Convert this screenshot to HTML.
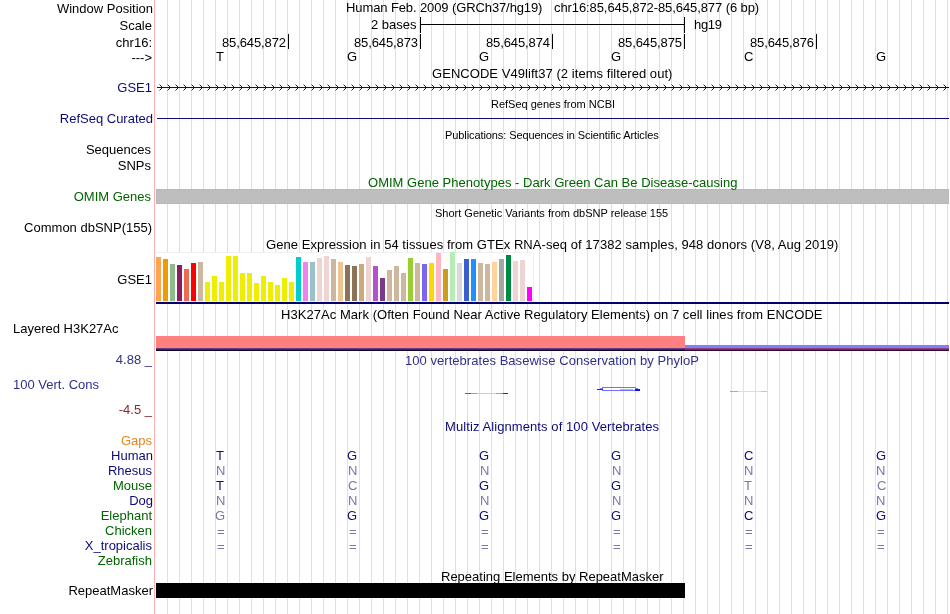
<!DOCTYPE html>
<html><head><meta charset="utf-8"><style>
html,body{margin:0;padding:0;background:#fff;overflow:hidden}
#c{position:relative;width:950px;height:614px;overflow:hidden;background:#fff;will-change:transform}
#c div{position:absolute}
#c .t{font-family:'Liberation Sans', sans-serif;line-height:15px;white-space:pre}
</style></head><body><div id="c">
<div style="left:167px;top:0px;width:1px;height:614px;background:#dcdcff;"></div>
<div style="left:179px;top:0px;width:1px;height:614px;background:#dcdcff;"></div>
<div style="left:191px;top:0px;width:1px;height:614px;background:#dcdcff;"></div>
<div style="left:203px;top:0px;width:1px;height:614px;background:#dcdcff;"></div>
<div style="left:215px;top:0px;width:1px;height:614px;background:#dcdcff;"></div>
<div style="left:227px;top:0px;width:1px;height:614px;background:#dcdcff;"></div>
<div style="left:239px;top:0px;width:1px;height:614px;background:#dcdcff;"></div>
<div style="left:251px;top:0px;width:1px;height:614px;background:#dcdcff;"></div>
<div style="left:263px;top:0px;width:1px;height:614px;background:#dcdcff;"></div>
<div style="left:275px;top:0px;width:1px;height:614px;background:#dcdcff;"></div>
<div style="left:287px;top:0px;width:1px;height:614px;background:#dcdcff;"></div>
<div style="left:299px;top:0px;width:1px;height:614px;background:#dcdcff;"></div>
<div style="left:311px;top:0px;width:1px;height:614px;background:#dcdcff;"></div>
<div style="left:323px;top:0px;width:1px;height:614px;background:#dcdcff;"></div>
<div style="left:335px;top:0px;width:1px;height:614px;background:#dcdcff;"></div>
<div style="left:347px;top:0px;width:1px;height:614px;background:#dcdcff;"></div>
<div style="left:359px;top:0px;width:1px;height:614px;background:#dcdcff;"></div>
<div style="left:371px;top:0px;width:1px;height:614px;background:#dcdcff;"></div>
<div style="left:383px;top:0px;width:1px;height:614px;background:#dcdcff;"></div>
<div style="left:395px;top:0px;width:1px;height:614px;background:#dcdcff;"></div>
<div style="left:407px;top:0px;width:1px;height:614px;background:#dcdcff;"></div>
<div style="left:419px;top:0px;width:1px;height:614px;background:#dcdcff;"></div>
<div style="left:431px;top:0px;width:1px;height:614px;background:#dcdcff;"></div>
<div style="left:443px;top:0px;width:1px;height:614px;background:#dcdcff;"></div>
<div style="left:455px;top:0px;width:1px;height:614px;background:#dcdcff;"></div>
<div style="left:467px;top:0px;width:1px;height:614px;background:#dcdcff;"></div>
<div style="left:479px;top:0px;width:1px;height:614px;background:#dcdcff;"></div>
<div style="left:491px;top:0px;width:1px;height:614px;background:#dcdcff;"></div>
<div style="left:503px;top:0px;width:1px;height:614px;background:#dcdcff;"></div>
<div style="left:515px;top:0px;width:1px;height:614px;background:#dcdcff;"></div>
<div style="left:527px;top:0px;width:1px;height:614px;background:#dcdcff;"></div>
<div style="left:539px;top:0px;width:1px;height:614px;background:#dcdcff;"></div>
<div style="left:551px;top:0px;width:1px;height:614px;background:#dcdcff;"></div>
<div style="left:563px;top:0px;width:1px;height:614px;background:#dcdcff;"></div>
<div style="left:575px;top:0px;width:1px;height:614px;background:#dcdcff;"></div>
<div style="left:587px;top:0px;width:1px;height:614px;background:#dcdcff;"></div>
<div style="left:599px;top:0px;width:1px;height:614px;background:#dcdcff;"></div>
<div style="left:611px;top:0px;width:1px;height:614px;background:#dcdcff;"></div>
<div style="left:623px;top:0px;width:1px;height:614px;background:#dcdcff;"></div>
<div style="left:635px;top:0px;width:1px;height:614px;background:#dcdcff;"></div>
<div style="left:647px;top:0px;width:1px;height:614px;background:#dcdcff;"></div>
<div style="left:659px;top:0px;width:1px;height:614px;background:#dcdcff;"></div>
<div style="left:671px;top:0px;width:1px;height:614px;background:#dcdcff;"></div>
<div style="left:683px;top:0px;width:1px;height:614px;background:#dcdcff;"></div>
<div style="left:695px;top:0px;width:1px;height:614px;background:#dcdcff;"></div>
<div style="left:707px;top:0px;width:1px;height:614px;background:#dcdcff;"></div>
<div style="left:719px;top:0px;width:1px;height:614px;background:#dcdcff;"></div>
<div style="left:731px;top:0px;width:1px;height:614px;background:#dcdcff;"></div>
<div style="left:743px;top:0px;width:1px;height:614px;background:#dcdcff;"></div>
<div style="left:755px;top:0px;width:1px;height:614px;background:#dcdcff;"></div>
<div style="left:767px;top:0px;width:1px;height:614px;background:#dcdcff;"></div>
<div style="left:779px;top:0px;width:1px;height:614px;background:#dcdcff;"></div>
<div style="left:791px;top:0px;width:1px;height:614px;background:#dcdcff;"></div>
<div style="left:803px;top:0px;width:1px;height:614px;background:#dcdcff;"></div>
<div style="left:815px;top:0px;width:1px;height:614px;background:#dcdcff;"></div>
<div style="left:827px;top:0px;width:1px;height:614px;background:#dcdcff;"></div>
<div style="left:839px;top:0px;width:1px;height:614px;background:#dcdcff;"></div>
<div style="left:851px;top:0px;width:1px;height:614px;background:#dcdcff;"></div>
<div style="left:863px;top:0px;width:1px;height:614px;background:#dcdcff;"></div>
<div style="left:875px;top:0px;width:1px;height:614px;background:#dcdcff;"></div>
<div style="left:887px;top:0px;width:1px;height:614px;background:#dcdcff;"></div>
<div style="left:899px;top:0px;width:1px;height:614px;background:#dcdcff;"></div>
<div style="left:911px;top:0px;width:1px;height:614px;background:#dcdcff;"></div>
<div style="left:923px;top:0px;width:1px;height:614px;background:#dcdcff;"></div>
<div style="left:935px;top:0px;width:1px;height:614px;background:#dcdcff;"></div>
<div style="left:947px;top:0px;width:1px;height:614px;background:#dcdcff;"></div>
<div style="left:154px;top:0px;width:1px;height:614px;background:#ffb0b0;"></div>
<div class="t" style="right:797px;top:1px;font-size:13px;color:#000;text-align:right">Window Position</div>
<div class="t" style="right:798px;top:18px;font-size:13px;color:#000;text-align:right">Scale</div>
<div class="t" style="right:798px;top:35px;font-size:13px;color:#000;text-align:right">chr16:</div>
<div class="t" style="right:798px;top:80px;font-size:13px;color:#0c0c78;text-align:right">GSE1</div>
<div class="t" style="right:797px;top:111px;font-size:13px;color:#0c0c78;text-align:right">RefSeq Curated</div>
<div class="t" style="right:799px;top:142px;font-size:13px;color:#000;text-align:right">Sequences</div>
<div class="t" style="right:799px;top:158px;font-size:13px;color:#000;text-align:right">SNPs</div>
<div class="t" style="right:799px;top:189px;font-size:13px;color:#006400;text-align:right">OMIM Genes</div>
<div class="t" style="right:798px;top:220px;font-size:13px;color:#000;text-align:right">Common dbSNP(155)</div>
<div class="t" style="right:798px;top:272px;font-size:13px;color:#000;text-align:right">GSE1</div>
<div class="t" style="right:798px;top:352px;font-size:13px;color:#30308c;text-align:right">4.88 _</div>
<div class="t" style="right:798px;top:402px;font-size:13px;color:#8c2828;text-align:right">-4.5 _</div>
<div class="t" style="right:798px;top:433px;font-size:13px;color:#e1871e;text-align:right">Gaps</div>
<div class="t" style="right:797px;top:448px;font-size:13px;color:#0c0c78;text-align:right">Human</div>
<div class="t" style="right:798px;top:463px;font-size:13px;color:#0c0c78;text-align:right">Rhesus</div>
<div class="t" style="right:798px;top:478px;font-size:13px;color:#006400;text-align:right">Mouse</div>
<div class="t" style="right:797px;top:493px;font-size:13px;color:#0c0c78;text-align:right">Dog</div>
<div class="t" style="right:798px;top:508px;font-size:13px;color:#006400;text-align:right">Elephant</div>
<div class="t" style="right:798px;top:523px;font-size:13px;color:#006400;text-align:right">Chicken</div>
<div class="t" style="right:798px;top:538px;font-size:13px;color:#0c0c78;text-align:right">X_tropicalis</div>
<div class="t" style="right:798px;top:553px;font-size:13px;color:#006400;text-align:right">Zebrafish</div>
<div class="t" style="right:797px;top:583px;font-size:13px;color:#000;text-align:right">RepeatMasker</div>
<div class="t" style="right:798px;top:50px;font-size:13px;color:#000;text-align:right">---&gt;</div>
<div style="left:420px;top:17px;width:1px;height:16px;background:#000;"></div>
<div style="left:684px;top:17px;width:1px;height:16px;background:#000;"></div>
<div style="left:420px;top:24px;width:265px;height:1px;background:#000;"></div>
<div style="left:288px;top:34px;width:1px;height:15px;background:#000;"></div>
<div style="left:420px;top:34px;width:1px;height:15px;background:#000;"></div>
<div style="left:552px;top:34px;width:1px;height:15px;background:#000;"></div>
<div style="left:684px;top:34px;width:1px;height:15px;background:#000;"></div>
<div style="left:816px;top:34px;width:1px;height:15px;background:#000;"></div>
<svg style="position:absolute;left:0;top:0" width="950" height="614"><rect x="157" y="87" width="792" height="1" fill="#0c0c78"/><path d="M161,86h1v3h-1zM160,85h1v1h-1zM160,89h1v1h-1zM169,86h1v3h-1zM168,85h1v1h-1zM168,89h1v1h-1zM177,86h1v3h-1zM176,85h1v1h-1zM176,89h1v1h-1zM185,86h1v3h-1zM184,85h1v1h-1zM184,89h1v1h-1zM193,86h1v3h-1zM192,85h1v1h-1zM192,89h1v1h-1zM201,86h1v3h-1zM200,85h1v1h-1zM200,89h1v1h-1zM209,86h1v3h-1zM208,85h1v1h-1zM208,89h1v1h-1zM217,86h1v3h-1zM216,85h1v1h-1zM216,89h1v1h-1zM225,86h1v3h-1zM224,85h1v1h-1zM224,89h1v1h-1zM233,86h1v3h-1zM232,85h1v1h-1zM232,89h1v1h-1zM241,86h1v3h-1zM240,85h1v1h-1zM240,89h1v1h-1zM249,86h1v3h-1zM248,85h1v1h-1zM248,89h1v1h-1zM257,86h1v3h-1zM256,85h1v1h-1zM256,89h1v1h-1zM265,86h1v3h-1zM264,85h1v1h-1zM264,89h1v1h-1zM273,86h1v3h-1zM272,85h1v1h-1zM272,89h1v1h-1zM281,86h1v3h-1zM280,85h1v1h-1zM280,89h1v1h-1zM289,86h1v3h-1zM288,85h1v1h-1zM288,89h1v1h-1zM297,86h1v3h-1zM296,85h1v1h-1zM296,89h1v1h-1zM305,86h1v3h-1zM304,85h1v1h-1zM304,89h1v1h-1zM313,86h1v3h-1zM312,85h1v1h-1zM312,89h1v1h-1zM321,86h1v3h-1zM320,85h1v1h-1zM320,89h1v1h-1zM329,86h1v3h-1zM328,85h1v1h-1zM328,89h1v1h-1zM337,86h1v3h-1zM336,85h1v1h-1zM336,89h1v1h-1zM345,86h1v3h-1zM344,85h1v1h-1zM344,89h1v1h-1zM353,86h1v3h-1zM352,85h1v1h-1zM352,89h1v1h-1zM361,86h1v3h-1zM360,85h1v1h-1zM360,89h1v1h-1zM369,86h1v3h-1zM368,85h1v1h-1zM368,89h1v1h-1zM377,86h1v3h-1zM376,85h1v1h-1zM376,89h1v1h-1zM385,86h1v3h-1zM384,85h1v1h-1zM384,89h1v1h-1zM393,86h1v3h-1zM392,85h1v1h-1zM392,89h1v1h-1zM401,86h1v3h-1zM400,85h1v1h-1zM400,89h1v1h-1zM409,86h1v3h-1zM408,85h1v1h-1zM408,89h1v1h-1zM417,86h1v3h-1zM416,85h1v1h-1zM416,89h1v1h-1zM425,86h1v3h-1zM424,85h1v1h-1zM424,89h1v1h-1zM433,86h1v3h-1zM432,85h1v1h-1zM432,89h1v1h-1zM441,86h1v3h-1zM440,85h1v1h-1zM440,89h1v1h-1zM449,86h1v3h-1zM448,85h1v1h-1zM448,89h1v1h-1zM457,86h1v3h-1zM456,85h1v1h-1zM456,89h1v1h-1zM465,86h1v3h-1zM464,85h1v1h-1zM464,89h1v1h-1zM473,86h1v3h-1zM472,85h1v1h-1zM472,89h1v1h-1zM481,86h1v3h-1zM480,85h1v1h-1zM480,89h1v1h-1zM489,86h1v3h-1zM488,85h1v1h-1zM488,89h1v1h-1zM497,86h1v3h-1zM496,85h1v1h-1zM496,89h1v1h-1zM505,86h1v3h-1zM504,85h1v1h-1zM504,89h1v1h-1zM513,86h1v3h-1zM512,85h1v1h-1zM512,89h1v1h-1zM521,86h1v3h-1zM520,85h1v1h-1zM520,89h1v1h-1zM529,86h1v3h-1zM528,85h1v1h-1zM528,89h1v1h-1zM537,86h1v3h-1zM536,85h1v1h-1zM536,89h1v1h-1zM545,86h1v3h-1zM544,85h1v1h-1zM544,89h1v1h-1zM553,86h1v3h-1zM552,85h1v1h-1zM552,89h1v1h-1zM561,86h1v3h-1zM560,85h1v1h-1zM560,89h1v1h-1zM569,86h1v3h-1zM568,85h1v1h-1zM568,89h1v1h-1zM577,86h1v3h-1zM576,85h1v1h-1zM576,89h1v1h-1zM585,86h1v3h-1zM584,85h1v1h-1zM584,89h1v1h-1zM593,86h1v3h-1zM592,85h1v1h-1zM592,89h1v1h-1zM601,86h1v3h-1zM600,85h1v1h-1zM600,89h1v1h-1zM609,86h1v3h-1zM608,85h1v1h-1zM608,89h1v1h-1zM617,86h1v3h-1zM616,85h1v1h-1zM616,89h1v1h-1zM625,86h1v3h-1zM624,85h1v1h-1zM624,89h1v1h-1zM633,86h1v3h-1zM632,85h1v1h-1zM632,89h1v1h-1zM641,86h1v3h-1zM640,85h1v1h-1zM640,89h1v1h-1zM649,86h1v3h-1zM648,85h1v1h-1zM648,89h1v1h-1zM657,86h1v3h-1zM656,85h1v1h-1zM656,89h1v1h-1zM665,86h1v3h-1zM664,85h1v1h-1zM664,89h1v1h-1zM673,86h1v3h-1zM672,85h1v1h-1zM672,89h1v1h-1zM681,86h1v3h-1zM680,85h1v1h-1zM680,89h1v1h-1zM689,86h1v3h-1zM688,85h1v1h-1zM688,89h1v1h-1zM697,86h1v3h-1zM696,85h1v1h-1zM696,89h1v1h-1zM705,86h1v3h-1zM704,85h1v1h-1zM704,89h1v1h-1zM713,86h1v3h-1zM712,85h1v1h-1zM712,89h1v1h-1zM721,86h1v3h-1zM720,85h1v1h-1zM720,89h1v1h-1zM729,86h1v3h-1zM728,85h1v1h-1zM728,89h1v1h-1zM737,86h1v3h-1zM736,85h1v1h-1zM736,89h1v1h-1zM745,86h1v3h-1zM744,85h1v1h-1zM744,89h1v1h-1zM753,86h1v3h-1zM752,85h1v1h-1zM752,89h1v1h-1zM761,86h1v3h-1zM760,85h1v1h-1zM760,89h1v1h-1zM769,86h1v3h-1zM768,85h1v1h-1zM768,89h1v1h-1zM777,86h1v3h-1zM776,85h1v1h-1zM776,89h1v1h-1zM785,86h1v3h-1zM784,85h1v1h-1zM784,89h1v1h-1zM793,86h1v3h-1zM792,85h1v1h-1zM792,89h1v1h-1zM801,86h1v3h-1zM800,85h1v1h-1zM800,89h1v1h-1zM809,86h1v3h-1zM808,85h1v1h-1zM808,89h1v1h-1zM817,86h1v3h-1zM816,85h1v1h-1zM816,89h1v1h-1zM825,86h1v3h-1zM824,85h1v1h-1zM824,89h1v1h-1zM833,86h1v3h-1zM832,85h1v1h-1zM832,89h1v1h-1zM841,86h1v3h-1zM840,85h1v1h-1zM840,89h1v1h-1zM849,86h1v3h-1zM848,85h1v1h-1zM848,89h1v1h-1zM857,86h1v3h-1zM856,85h1v1h-1zM856,89h1v1h-1zM865,86h1v3h-1zM864,85h1v1h-1zM864,89h1v1h-1zM873,86h1v3h-1zM872,85h1v1h-1zM872,89h1v1h-1zM881,86h1v3h-1zM880,85h1v1h-1zM880,89h1v1h-1zM889,86h1v3h-1zM888,85h1v1h-1zM888,89h1v1h-1zM897,86h1v3h-1zM896,85h1v1h-1zM896,89h1v1h-1zM905,86h1v3h-1zM904,85h1v1h-1zM904,89h1v1h-1zM913,86h1v3h-1zM912,85h1v1h-1zM912,89h1v1h-1zM921,86h1v3h-1zM920,85h1v1h-1zM920,89h1v1h-1zM929,86h1v3h-1zM928,85h1v1h-1zM928,89h1v1h-1zM937,86h1v3h-1zM936,85h1v1h-1zM936,89h1v1h-1zM945,86h1v3h-1zM944,85h1v1h-1zM944,89h1v1h-1z" fill="#0c0c78" shape-rendering="crispEdges"/><path d="M159,84h1v1h-1zM159,90h1v1h-1zM167,84h1v1h-1zM167,90h1v1h-1zM175,84h1v1h-1zM175,90h1v1h-1zM183,84h1v1h-1zM183,90h1v1h-1zM191,84h1v1h-1zM191,90h1v1h-1zM199,84h1v1h-1zM199,90h1v1h-1zM207,84h1v1h-1zM207,90h1v1h-1zM215,84h1v1h-1zM215,90h1v1h-1zM223,84h1v1h-1zM223,90h1v1h-1zM231,84h1v1h-1zM231,90h1v1h-1zM239,84h1v1h-1zM239,90h1v1h-1zM247,84h1v1h-1zM247,90h1v1h-1zM255,84h1v1h-1zM255,90h1v1h-1zM263,84h1v1h-1zM263,90h1v1h-1zM271,84h1v1h-1zM271,90h1v1h-1zM279,84h1v1h-1zM279,90h1v1h-1zM287,84h1v1h-1zM287,90h1v1h-1zM295,84h1v1h-1zM295,90h1v1h-1zM303,84h1v1h-1zM303,90h1v1h-1zM311,84h1v1h-1zM311,90h1v1h-1zM319,84h1v1h-1zM319,90h1v1h-1zM327,84h1v1h-1zM327,90h1v1h-1zM335,84h1v1h-1zM335,90h1v1h-1zM343,84h1v1h-1zM343,90h1v1h-1zM351,84h1v1h-1zM351,90h1v1h-1zM359,84h1v1h-1zM359,90h1v1h-1zM367,84h1v1h-1zM367,90h1v1h-1zM375,84h1v1h-1zM375,90h1v1h-1zM383,84h1v1h-1zM383,90h1v1h-1zM391,84h1v1h-1zM391,90h1v1h-1zM399,84h1v1h-1zM399,90h1v1h-1zM407,84h1v1h-1zM407,90h1v1h-1zM415,84h1v1h-1zM415,90h1v1h-1zM423,84h1v1h-1zM423,90h1v1h-1zM431,84h1v1h-1zM431,90h1v1h-1zM439,84h1v1h-1zM439,90h1v1h-1zM447,84h1v1h-1zM447,90h1v1h-1zM455,84h1v1h-1zM455,90h1v1h-1zM463,84h1v1h-1zM463,90h1v1h-1zM471,84h1v1h-1zM471,90h1v1h-1zM479,84h1v1h-1zM479,90h1v1h-1zM487,84h1v1h-1zM487,90h1v1h-1zM495,84h1v1h-1zM495,90h1v1h-1zM503,84h1v1h-1zM503,90h1v1h-1zM511,84h1v1h-1zM511,90h1v1h-1zM519,84h1v1h-1zM519,90h1v1h-1zM527,84h1v1h-1zM527,90h1v1h-1zM535,84h1v1h-1zM535,90h1v1h-1zM543,84h1v1h-1zM543,90h1v1h-1zM551,84h1v1h-1zM551,90h1v1h-1zM559,84h1v1h-1zM559,90h1v1h-1zM567,84h1v1h-1zM567,90h1v1h-1zM575,84h1v1h-1zM575,90h1v1h-1zM583,84h1v1h-1zM583,90h1v1h-1zM591,84h1v1h-1zM591,90h1v1h-1zM599,84h1v1h-1zM599,90h1v1h-1zM607,84h1v1h-1zM607,90h1v1h-1zM615,84h1v1h-1zM615,90h1v1h-1zM623,84h1v1h-1zM623,90h1v1h-1zM631,84h1v1h-1zM631,90h1v1h-1zM639,84h1v1h-1zM639,90h1v1h-1zM647,84h1v1h-1zM647,90h1v1h-1zM655,84h1v1h-1zM655,90h1v1h-1zM663,84h1v1h-1zM663,90h1v1h-1zM671,84h1v1h-1zM671,90h1v1h-1zM679,84h1v1h-1zM679,90h1v1h-1zM687,84h1v1h-1zM687,90h1v1h-1zM695,84h1v1h-1zM695,90h1v1h-1zM703,84h1v1h-1zM703,90h1v1h-1zM711,84h1v1h-1zM711,90h1v1h-1zM719,84h1v1h-1zM719,90h1v1h-1zM727,84h1v1h-1zM727,90h1v1h-1zM735,84h1v1h-1zM735,90h1v1h-1zM743,84h1v1h-1zM743,90h1v1h-1zM751,84h1v1h-1zM751,90h1v1h-1zM759,84h1v1h-1zM759,90h1v1h-1zM767,84h1v1h-1zM767,90h1v1h-1zM775,84h1v1h-1zM775,90h1v1h-1zM783,84h1v1h-1zM783,90h1v1h-1zM791,84h1v1h-1zM791,90h1v1h-1zM799,84h1v1h-1zM799,90h1v1h-1zM807,84h1v1h-1zM807,90h1v1h-1zM815,84h1v1h-1zM815,90h1v1h-1zM823,84h1v1h-1zM823,90h1v1h-1zM831,84h1v1h-1zM831,90h1v1h-1zM839,84h1v1h-1zM839,90h1v1h-1zM847,84h1v1h-1zM847,90h1v1h-1zM855,84h1v1h-1zM855,90h1v1h-1zM863,84h1v1h-1zM863,90h1v1h-1zM871,84h1v1h-1zM871,90h1v1h-1zM879,84h1v1h-1zM879,90h1v1h-1zM887,84h1v1h-1zM887,90h1v1h-1zM895,84h1v1h-1zM895,90h1v1h-1zM903,84h1v1h-1zM903,90h1v1h-1zM911,84h1v1h-1zM911,90h1v1h-1zM919,84h1v1h-1zM919,90h1v1h-1zM927,84h1v1h-1zM927,90h1v1h-1zM935,84h1v1h-1zM935,90h1v1h-1zM943,84h1v1h-1zM943,90h1v1h-1z" fill="#9090c8" shape-rendering="crispEdges"/></svg>
<div style="left:157px;top:118px;width:792px;height:1px;background:#0c0c78;"></div>
<div style="left:156px;top:189px;width:793px;height:15px;background:#bebebe;box-sizing:border-box;border:1px solid #b8b8b8"></div>
<div style="left:155px;top:252px;width:379px;height:50px;background:#fff;box-sizing:border-box;border:1px solid #f0f0f0;border-left:none;"></div>
<div style="left:156px;top:257px;width:5px;height:44px;background:#FFA54F;"></div>
<div style="left:163px;top:259px;width:5px;height:42px;background:#EE9A00;"></div>
<div style="left:170px;top:264px;width:5px;height:37px;background:#8FBC8F;"></div>
<div style="left:177px;top:265px;width:5px;height:36px;background:#8B1C62;"></div>
<div style="left:184px;top:269px;width:5px;height:32px;background:#EE6A50;"></div>
<div style="left:191px;top:263px;width:5px;height:38px;background:#FF0000;"></div>
<div style="left:198px;top:262px;width:5px;height:39px;background:#CDB79E;"></div>
<div style="left:205px;top:282px;width:5px;height:19px;background:#EEEE00;"></div>
<div style="left:212px;top:276px;width:5px;height:25px;background:#EEEE00;"></div>
<div style="left:219px;top:282px;width:5px;height:19px;background:#EEEE00;"></div>
<div style="left:226px;top:256px;width:5px;height:45px;background:#EEEE00;"></div>
<div style="left:233px;top:256px;width:5px;height:45px;background:#EEEE00;"></div>
<div style="left:240px;top:273px;width:5px;height:28px;background:#EEEE00;"></div>
<div style="left:247px;top:273px;width:5px;height:28px;background:#EEEE00;"></div>
<div style="left:254px;top:283px;width:5px;height:18px;background:#EEEE00;"></div>
<div style="left:261px;top:276px;width:5px;height:25px;background:#EEEE00;"></div>
<div style="left:268px;top:282px;width:5px;height:19px;background:#EEEE00;"></div>
<div style="left:275px;top:285px;width:5px;height:16px;background:#EEEE00;"></div>
<div style="left:282px;top:278px;width:5px;height:23px;background:#EEEE00;"></div>
<div style="left:289px;top:282px;width:5px;height:19px;background:#EEEE00;"></div>
<div style="left:296px;top:257px;width:5px;height:44px;background:#00CDCD;"></div>
<div style="left:303px;top:262px;width:5px;height:39px;background:#EE82EE;"></div>
<div style="left:310px;top:262px;width:5px;height:39px;background:#9AC0CD;"></div>
<div style="left:317px;top:258px;width:5px;height:43px;background:#EED5D2;"></div>
<div style="left:324px;top:256px;width:5px;height:45px;background:#EED5D2;"></div>
<div style="left:331px;top:259px;width:5px;height:42px;background:#CDB79E;"></div>
<div style="left:338px;top:262px;width:5px;height:39px;background:#EEC591;"></div>
<div style="left:345px;top:265px;width:5px;height:36px;background:#8B7355;"></div>
<div style="left:352px;top:266px;width:5px;height:35px;background:#8B7355;"></div>
<div style="left:359px;top:264px;width:5px;height:37px;background:#CDAA7D;"></div>
<div style="left:366px;top:257px;width:5px;height:44px;background:#EED5D2;"></div>
<div style="left:373px;top:266px;width:5px;height:35px;background:#B452CD;"></div>
<div style="left:380px;top:278px;width:5px;height:23px;background:#7A378B;"></div>
<div style="left:387px;top:270px;width:5px;height:31px;background:#CDB79E;"></div>
<div style="left:394px;top:266px;width:5px;height:35px;background:#CDB79E;"></div>
<div style="left:401px;top:273px;width:5px;height:28px;background:#CDB79E;"></div>
<div style="left:408px;top:258px;width:5px;height:43px;background:#9ACD32;"></div>
<div style="left:415px;top:263px;width:5px;height:38px;background:#CDB79E;"></div>
<div style="left:422px;top:264px;width:5px;height:37px;background:#7A67EE;"></div>
<div style="left:429px;top:263px;width:5px;height:38px;background:#FFD700;"></div>
<div style="left:436px;top:253px;width:5px;height:48px;background:#FFB6C1;"></div>
<div style="left:443px;top:269px;width:5px;height:32px;background:#CD9B1D;"></div>
<div style="left:450px;top:252px;width:5px;height:49px;background:#B4EEB4;"></div>
<div style="left:457px;top:263px;width:5px;height:38px;background:#D9D9D9;"></div>
<div style="left:464px;top:259px;width:5px;height:42px;background:#3A5FCD;"></div>
<div style="left:471px;top:259px;width:5px;height:42px;background:#1E90FF;"></div>
<div style="left:478px;top:263px;width:5px;height:38px;background:#CDB79E;"></div>
<div style="left:485px;top:264px;width:5px;height:37px;background:#CDB79E;"></div>
<div style="left:492px;top:262px;width:5px;height:39px;background:#FFD39B;"></div>
<div style="left:499px;top:259px;width:5px;height:42px;background:#A6A6A6;"></div>
<div style="left:506px;top:255px;width:5px;height:46px;background:#008B45;"></div>
<div style="left:513px;top:261px;width:5px;height:40px;background:#EED5D2;"></div>
<div style="left:520px;top:260px;width:5px;height:41px;background:#EED5D2;"></div>
<div style="left:527px;top:287px;width:5px;height:14px;background:#FF00FF;"></div>
<div style="left:156px;top:302px;width:793px;height:2px;background:#00006e;"></div>
<div style="left:156px;top:336px;width:529px;height:12px;background:#ff8080;"></div>
<div style="left:156px;top:348px;width:529px;height:1px;background:#64408a;"></div>
<div style="left:156px;top:349px;width:529px;height:1px;background:#32285a;"></div>
<div style="left:156px;top:350px;width:529px;height:1px;background:#0f052d;"></div>
<div style="left:685px;top:345px;width:264px;height:3px;background:#8080ff;"></div>
<div style="left:685px;top:348px;width:264px;height:1px;background:#8c4080;"></div>
<div style="left:685px;top:349px;width:264px;height:1px;background:#6e2d64;"></div>
<div style="left:685px;top:350px;width:264px;height:1px;background:#320a32;"></div>
<div style="left:465px;top:393px;width:43px;height:1px;background:#c8c8ff;"></div>
<div style="left:465px;top:393px;width:6px;height:1px;background:#5050ff;"></div>
<div style="left:471px;top:393px;width:6px;height:1px;background:#9090ff;"></div>
<div style="left:496px;top:393px;width:7px;height:1px;background:#9090ff;"></div>
<div style="left:503px;top:393px;width:5px;height:1px;background:#1818ff;"></div>
<div style="left:602px;top:387px;width:34px;height:1px;background:#7070ff;"></div>
<div style="left:602px;top:390px;width:34px;height:1px;background:#7070ff;"></div>
<div style="left:600px;top:388px;width:3px;height:1px;background:#8080ff;"></div>
<div style="left:597px;top:389px;width:6px;height:1px;background:#2020ff;"></div>
<div style="left:620px;top:389px;width:13px;height:1px;background:#b0b0ff;"></div>
<div style="left:635px;top:388px;width:3px;height:1px;background:#8080ff;"></div>
<div style="left:635px;top:389px;width:5px;height:2px;background:#1010ff;"></div>
<div style="left:730px;top:391px;width:38px;height:1px;background:#e4e4b0;"></div>
<div style="left:730px;top:391px;width:8px;height:1px;background:#b8b84a;"></div>
<div style="left:761px;top:391px;width:6px;height:1px;background:#cccc80;"></div>
<div style="left:156px;top:583px;width:529px;height:15px;background:#000;"></div>
<div class="t" style="left:13px;top:321px;font-size:13px;color:#000;">Layered H3K27Ac</div>
<div class="t" style="left:13px;top:377px;font-size:13px;color:#30308c;">100 Vert. Cons</div>
<div class="t" style="left:346px;top:0px;font-size:13px;color:#000;letter-spacing:-0.107px;">Human Feb. 2009 (GRCh37/hg19)</div>
<div class="t" style="left:554px;top:0px;font-size:13px;color:#000;letter-spacing:-0.091px;">chr16:85,645,872-85,645,877 (6 bp)</div>
<div class="t" style="left:371px;top:17px;font-size:13px;color:#000;">2 bases</div>
<div class="t" style="left:694px;top:17px;font-size:13px;color:#000;letter-spacing:-0.333px;">hg19</div>
<div class="t" style="left:222px;top:35px;font-size:13px;color:#000;letter-spacing:-0.111px;">85,645,872</div>
<div class="t" style="left:354px;top:35px;font-size:13px;color:#000;letter-spacing:-0.111px;">85,645,873</div>
<div class="t" style="left:486px;top:35px;font-size:13px;color:#000;letter-spacing:-0.111px;">85,645,874</div>
<div class="t" style="left:618px;top:35px;font-size:13px;color:#000;letter-spacing:-0.111px;">85,645,875</div>
<div class="t" style="left:750px;top:35px;font-size:13px;color:#000;letter-spacing:-0.111px;">85,645,876</div>
<div class="t" style="left:216px;top:49px;font-size:13px;color:#000;">T</div>
<div class="t" style="left:347px;top:49px;font-size:13px;color:#000;">G</div>
<div class="t" style="left:479px;top:49px;font-size:13px;color:#000;">G</div>
<div class="t" style="left:611px;top:49px;font-size:13px;color:#000;">G</div>
<div class="t" style="left:744px;top:49px;font-size:13px;color:#000;">C</div>
<div class="t" style="left:876px;top:49px;font-size:13px;color:#000;">G</div>
<div class="t" style="left:432px;top:66px;font-size:13px;color:#000;letter-spacing:0.051px;">GENCODE V49lift37 (2 items filtered out)</div>
<div class="t" style="left:491px;top:97px;font-size:11px;color:#000;">RefSeq genes from NCBI</div>
<div class="t" style="left:445px;top:128px;font-size:11px;color:#000;letter-spacing:-0.089px;">Publications: Sequences in Scientific Articles</div>
<div class="t" style="left:368px;top:175px;font-size:13px;color:#006400;letter-spacing:0.018px;">OMIM Gene Phenotypes - Dark Green Can Be Disease-causing</div>
<div class="t" style="left:435px;top:206px;font-size:11px;color:#000;">Short Genetic Variants from dbSNP release 155</div>
<div class="t" style="left:266px;top:237px;font-size:13px;color:#000;letter-spacing:0.056px;">Gene Expression in 54 tissues from GTEx RNA-seq of 17382 samples, 948 donors (V8, Aug 2019)</div>
<div class="t" style="left:281px;top:307px;font-size:13px;color:#000;letter-spacing:0.047px;">H3K27Ac Mark (Often Found Near Active Regulatory Elements) on 7 cell lines from ENCODE</div>
<div class="t" style="left:405px;top:353px;font-size:13px;color:#30308c;letter-spacing:0.043px;">100 vertebrates Basewise Conservation by PhyloP</div>
<div class="t" style="left:445px;top:419px;font-size:13px;color:#0c0c78;letter-spacing:0.086px;">Multiz Alignments of 100 Vertebrates</div>
<div class="t" style="left:216px;top:448px;font-size:13px;color:#0c0c78;">T</div>
<div class="t" style="left:216px;top:463px;font-size:13px;color:#7878aa;">N</div>
<div class="t" style="left:216px;top:478px;font-size:13px;color:#0c0c78;">T</div>
<div class="t" style="left:216px;top:493px;font-size:13px;color:#7878aa;">N</div>
<div class="t" style="left:215px;top:508px;font-size:13px;color:#7878aa;">G</div>
<div class="t" style="left:217px;top:524px;font-size:13px;color:#7878aa;">=</div>
<div class="t" style="left:217px;top:539px;font-size:13px;color:#7878aa;">=</div>
<div class="t" style="left:347px;top:448px;font-size:13px;color:#0c0c78;">G</div>
<div class="t" style="left:348px;top:463px;font-size:13px;color:#7878aa;">N</div>
<div class="t" style="left:348px;top:478px;font-size:13px;color:#7878aa;">C</div>
<div class="t" style="left:348px;top:493px;font-size:13px;color:#7878aa;">N</div>
<div class="t" style="left:347px;top:508px;font-size:13px;color:#0c0c78;">G</div>
<div class="t" style="left:349px;top:524px;font-size:13px;color:#7878aa;">=</div>
<div class="t" style="left:349px;top:539px;font-size:13px;color:#7878aa;">=</div>
<div class="t" style="left:479px;top:448px;font-size:13px;color:#0c0c78;">G</div>
<div class="t" style="left:480px;top:463px;font-size:13px;color:#7878aa;">N</div>
<div class="t" style="left:479px;top:478px;font-size:13px;color:#0c0c78;">G</div>
<div class="t" style="left:480px;top:493px;font-size:13px;color:#7878aa;">N</div>
<div class="t" style="left:479px;top:508px;font-size:13px;color:#0c0c78;">G</div>
<div class="t" style="left:481px;top:524px;font-size:13px;color:#7878aa;">=</div>
<div class="t" style="left:481px;top:539px;font-size:13px;color:#7878aa;">=</div>
<div class="t" style="left:611px;top:448px;font-size:13px;color:#0c0c78;">G</div>
<div class="t" style="left:612px;top:463px;font-size:13px;color:#7878aa;">N</div>
<div class="t" style="left:611px;top:478px;font-size:13px;color:#0c0c78;">G</div>
<div class="t" style="left:612px;top:493px;font-size:13px;color:#7878aa;">N</div>
<div class="t" style="left:611px;top:508px;font-size:13px;color:#0c0c78;">G</div>
<div class="t" style="left:613px;top:524px;font-size:13px;color:#7878aa;">=</div>
<div class="t" style="left:613px;top:539px;font-size:13px;color:#7878aa;">=</div>
<div class="t" style="left:744px;top:448px;font-size:13px;color:#0c0c78;">C</div>
<div class="t" style="left:744px;top:463px;font-size:13px;color:#7878aa;">N</div>
<div class="t" style="left:744px;top:478px;font-size:13px;color:#7878aa;">T</div>
<div class="t" style="left:744px;top:493px;font-size:13px;color:#7878aa;">N</div>
<div class="t" style="left:744px;top:508px;font-size:13px;color:#0c0c78;">C</div>
<div class="t" style="left:745px;top:524px;font-size:13px;color:#7878aa;">=</div>
<div class="t" style="left:745px;top:539px;font-size:13px;color:#7878aa;">=</div>
<div class="t" style="left:876px;top:448px;font-size:13px;color:#0c0c78;">G</div>
<div class="t" style="left:876px;top:463px;font-size:13px;color:#7878aa;">N</div>
<div class="t" style="left:877px;top:478px;font-size:13px;color:#7878aa;">C</div>
<div class="t" style="left:876px;top:493px;font-size:13px;color:#7878aa;">N</div>
<div class="t" style="left:876px;top:508px;font-size:13px;color:#0c0c78;">G</div>
<div class="t" style="left:877px;top:524px;font-size:13px;color:#7878aa;">=</div>
<div class="t" style="left:877px;top:539px;font-size:13px;color:#7878aa;">=</div>
<div class="t" style="left:441px;top:569px;font-size:13px;color:#000;">Repeating Elements by RepeatMasker</div>
</div></body></html>
